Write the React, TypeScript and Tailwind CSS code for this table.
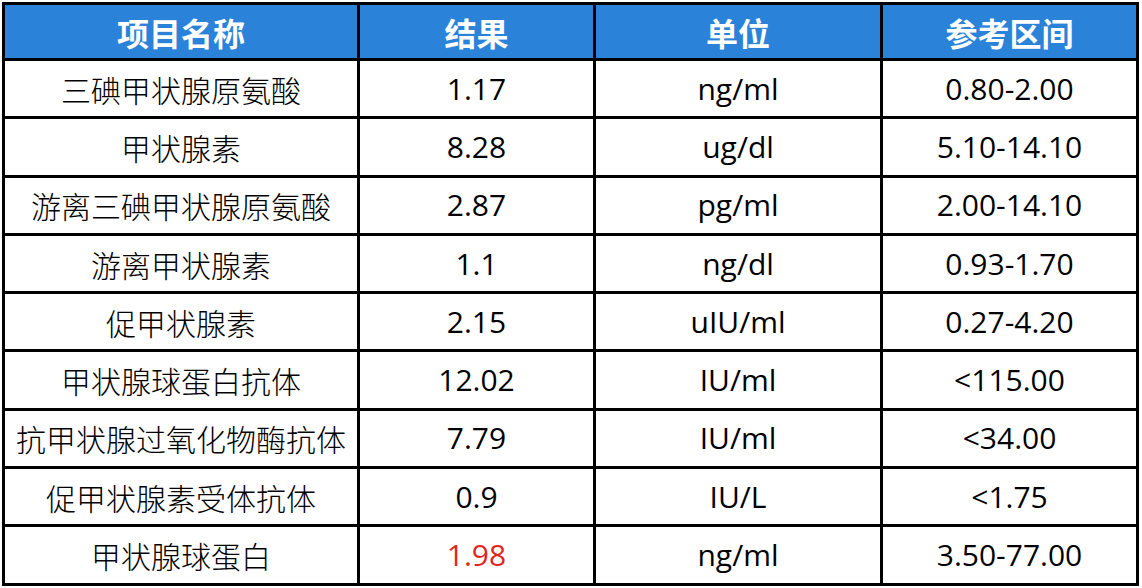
import React from "react";

const rows: [string, string, string, string][] = [
  ["三碘甲状腺原氨酸", "1.17", "ng/ml", "0.80-2.00"],
  ["甲状腺素", "8.28", "ug/dl", "5.10-14.10"],
  ["游离三碘甲状腺原氨酸", "2.87", "pg/ml", "2.00-14.10"],
  ["游离甲状腺素", "1.1", "ng/dl", "0.93-1.70"],
  ["促甲状腺素", "2.15", "uIU/ml", "0.27-4.20"],
  ["甲状腺球蛋白抗体", "12.02", "IU/ml", "<115.00"],
  ["抗甲状腺过氧化物酶抗体", "7.79", "IU/ml", "<34.00"],
  ["促甲状腺素受体抗体", "0.9", "IU/L", "<1.75"],
  ["甲状腺球蛋白", "1.98", "ng/ml", "3.50-77.00"],
];

const headers = ["项目名称", "结果", "单位", "参考区间"];

export default function App() {
  return (
    <div className="w-[1142px] h-[588px] bg-white pl-[2px] pt-[2px]">
      <div
        className="w-[1137px] grid grid-cols-[352px_233px_284px_253px] grid-rows-[53px_repeat(9,55.3px)] gap-[3px] p-[3px] bg-black"
        style={{ fontFamily: '"Open Sans", "Noto Sans CJK SC", sans-serif' }}
      >
        {headers.map((h) => (
          <div
            key={h}
            className="bg-[#2a83d9] flex items-center justify-center text-white font-bold text-[32px] leading-none"
            style={{ fontFamily: '"Noto Sans CJK SC", sans-serif' }}
          >
            {h}
          </div>
        ))}
        {rows.map((r, i) => (
          <React.Fragment key={i}>
            <div
              className="bg-white flex items-center justify-center text-black text-[30px] font-light leading-none whitespace-nowrap"
              style={{ fontFamily: '"Noto Sans CJK SC", sans-serif' }}
            >
              {r[0]}
            </div>
            <div
              className={
                "bg-white flex items-center justify-center text-[30px] leading-none " +
                (r[0] === "甲状腺球蛋白" ? "text-[#e0261c]" : "text-black")
              }
            >
              {r[1]}
            </div>
            <div className="bg-white flex items-center justify-center text-black text-[30px] leading-none">
              {r[2]}
            </div>
            <div className="bg-white flex items-center justify-center text-black text-[30px] leading-none">
              {r[3]}
            </div>
          </React.Fragment>
        ))}
      </div>
    </div>
  );
}
